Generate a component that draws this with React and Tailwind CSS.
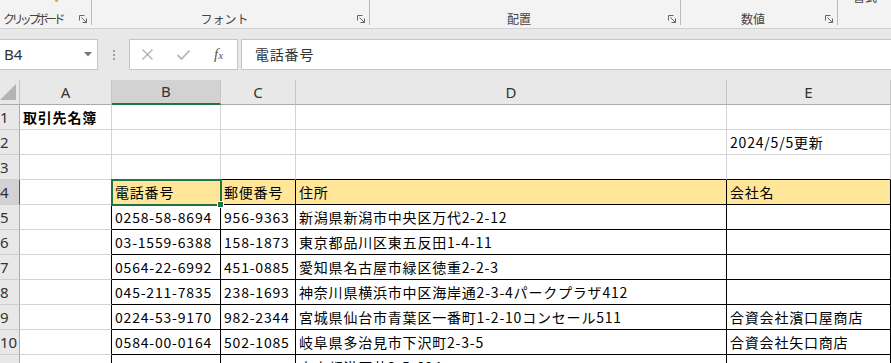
import React from 'react';

const cols = ['A', 'B', 'C', 'D', 'E'];

const rows = [
  ['取引先名簿', '', '', '', ''],
  ['', '', '', '', '2024/5/5更新'],
  ['', '', '', '', ''],
  ['', '電話番号', '郵便番号', '住所', '会社名'],
  ['', '0258-58-8694', '956-9363', '新潟県新潟市中央区万代2-2-12', ''],
  ['', '03-1559-6388', '158-1873', '東京都品川区東五反田1-4-11', ''],
  ['', '0564-22-6992', '451-0885', '愛知県名古屋市緑区徳重2-2-3', ''],
  ['', '045-211-7835', '238-1693', '神奈川県横浜市中区海岸通2-3-4パークプラザ412', ''],
  ['', '0224-53-9170', '982-2344', '宮城県仙台市青葉区一番町1-2-10コンセール511', '合資会社濱口屋商店'],
  ['', '0584-00-0164', '502-1085', '岐阜県多治見市下沢町2-3-5', '合資会社矢口商店'],
  ['', '03-3477-4661', '150-4661', '東京都港区芝3-5-604', ''],
];

function Launcher() {
  return (
    <svg width="9" height="9" viewBox="0 0 9 9" className="mb-[1px] mr-[3px] shrink-0">
      <path d="M0.5 5.5V0.5H5.5" fill="none" stroke="#666" />
      <path d="M2.5 2.5L7.5 7.5M7.5 3.5V7.5H3.5" fill="none" stroke="#666" />
    </svg>
  );
}

function Group({ label, width, left }) {
  return (
    <div className={`${width} h-[25px] flex items-end border-r border-[#b9b9b9]`}>
      <span className={`flex-1 leading-[12px] text-[12px] text-[#444] ${left ? 'pl-[3px] tracking-[-3.6px]' : 'text-center'}`}>
        {label}
      </span>
      <Launcher />
    </div>
  );
}

export default function App() {
  return (
    <div className="w-[891px] h-[363px] overflow-hidden bg-white font-['Noto_Sans_CJK_JP',sans-serif]">
      {/* ribbon */}
      <div className="h-[29px] bg-[#f3f3f3] border-b border-[#d2d2d2] flex items-start">
        <div className="relative">
          <span className="absolute left-[55px] top-0 w-[3px] h-[2px] rounded-b-full bg-[#f0a030]" />
          <Group label="クリップボード" width="w-[92px]" left />
        </div>
        <Group label="フォント" width="w-[278px]" />
        <Group label="配置" width="w-[311px]" />
        <Group label="数値" width="w-[157px]" />
        <div className="flex-1 h-[25px] overflow-hidden">
          <div className="pl-[15px] -mt-[10px] text-[12px] leading-[14px] text-[#444]">書式</div>
        </div>
      </div>

      {/* formula bar */}
      <div className="h-[51px] bg-[#e8e8e8] flex items-start pt-[10px]">
        <div className="w-[98px] h-[31px] bg-white border border-l-0 border-[#c6c6c6] flex items-center justify-between pl-[4px] pr-[5px]">
          <span className="font-['Noto_Sans',sans-serif] text-[15px] text-[#333] leading-none">B4</span>
          <svg width="8" height="5" viewBox="0 0 8 5">
            <path d="M0 0H8L4 4.5Z" fill="#777" />
          </svg>
        </div>
        <div className="w-[31px] h-[31px] flex flex-col items-center justify-center gap-[2px]">
          <span className="w-[2px] h-[2px] bg-[#a0a0a0]" />
          <span className="w-[2px] h-[2px] bg-[#a0a0a0]" />
          <span className="w-[2px] h-[2px] bg-[#a0a0a0]" />
        </div>
        <div className="w-[109px] h-[31px] bg-white border border-[#c6c6c6] flex items-center">
          <svg width="11" height="11" viewBox="0 0 11 11" className="ml-[12px]">
            <path d="M0.5 0.5L10.5 10.5M10.5 0.5L0.5 10.5" stroke="#b0b0b0" strokeWidth="1.3" />
          </svg>
          <svg width="13" height="10" viewBox="0 0 13 10" className="ml-[24px]">
            <path d="M0.5 5L4.5 9L12.5 0.5" fill="none" stroke="#b8b8b8" strokeWidth="1.8" />
          </svg>
          <span className="ml-[24px] font-['Liberation_Serif',serif] italic text-[15px] text-[#555] leading-none">
            f<span className="text-[11px]">x</span>
          </span>
        </div>
        <div className="flex-1 ml-[3px] h-[31px] bg-white border border-r-0 border-[#c6c6c6] flex items-center pl-[13px]">
          <span className="text-[14px] tracking-[0.8px] text-[#333]">電話番号</span>
        </div>
      </div>

      {/* sheet */}
      <div className="relative">
        <div className="grid grid-cols-[20px_92px_109px_75px_431px_1fr] h-[25px] bg-[#e8e8e8] font-['Noto_Sans',sans-serif] text-[15px] text-[#333]">
          <div className="border-r border-b border-r-[#c6c6c6] border-b-[#ababab] flex items-end justify-end pb-[4px] pr-[3px]">
            <svg width="16" height="16" viewBox="0 0 16 16">
              <path d="M16 0V16H0Z" fill="#b4b4b4" />
            </svg>
          </div>
          {cols.map((c) => (
            <div
              key={c}
              className={
                c === 'B'
                  ? 'bg-[#d2d2d2] border-r border-r-[#c6c6c6] border-b-2 border-b-[#217346] flex items-center justify-center'
                  : 'border-r border-r-[#c6c6c6] border-b border-b-[#ababab] flex items-center justify-center'
              }
            >
              {c}
            </div>
          ))}
        </div>

        {rows.map((cells, i) => {
          const r = i + 1;
          return (
            <div key={r} className="grid grid-cols-[20px_92px_109px_75px_431px_1fr] h-[25px]">
              <div
                className={`h-[25px] border-r border-b border-b-[#cfcfcf] font-['Noto_Sans',sans-serif] text-[15px] text-[#333] leading-[24px] ${
                  r === 4 ? 'bg-[#d2d2d2] border-r-[#217346]' : 'bg-[#e8e8e8] border-r-[#ababab]'
                }`}
              >
                {r}
              </div>
              {cells.map((v, c) => {
                const inTable = r >= 4 && c >= 1;
                const rightBlack = inTable || (c === 0 && r >= 4);
                const bottomBlack = inTable || (r === 3 && c >= 1);
                return (
                  <div
                    key={c}
                    className={`h-[25px] border-r border-b flex items-center px-[3px] overflow-hidden whitespace-nowrap text-[14px] tracking-[0.8px] text-black ${
                      rightBlack ? 'border-r-black' : 'border-r-[#d4d4d4]'
                    } ${bottomBlack ? 'border-b-black' : 'border-b-[#d4d4d4]'} ${r === 4 && c >= 1 ? 'bg-[#ffe699]' : ''} ${
                      r === 1 && c === 0 ? 'font-bold' : ''
                    }`}
                  >
                    {v}
                  </div>
                );
              })}
            </div>
          );
        })}

        {/* active cell B4 */}
        <div className="absolute left-[111px] top-[99px] w-[111px] h-[27px] border-2 border-[#217346] pointer-events-none" />
        <div className="absolute left-[217px] top-[121px] w-[7px] h-[7px] bg-[#217346] border border-white" />
      </div>
    </div>
  );
}
